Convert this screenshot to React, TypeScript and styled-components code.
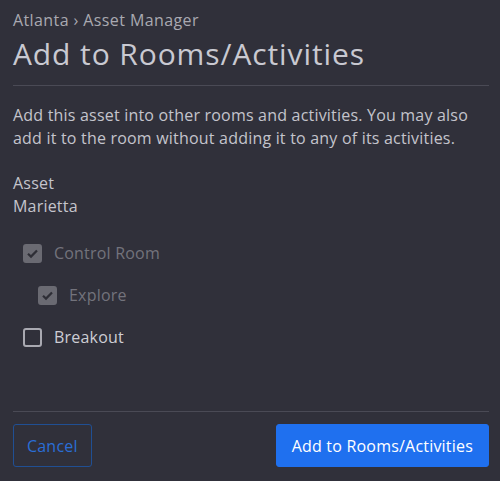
import React from "react";
import styled, { createGlobalStyle } from "styled-components";

const GlobalStyle = createGlobalStyle`
	html, body {
		margin: 0;
		padding: 0;
		background: #30303a;
	}
	body {
		font-family: "Open Sans", "Noto Sans", sans-serif;
	}
`;

const Dialog = styled.div`
	width: 500px;
	height: 481px;
	box-sizing: border-box;
	padding: 6px 11px 14px 13px;
	background: #30303a;
	display: flex;
	flex-direction: column;
`;

const Breadcrumb = styled.div`
	font-size: 16px;
	letter-spacing: 0.4px;
	line-height: 28px;
	color: #a9a9b1;
`;

const Title = styled.h1`
	margin: 0;
	font-size: 30px;
	font-weight: 400;
	letter-spacing: 0.9px;
	line-height: 40px;
	color: #c9c9d1;
	padding-bottom: 11px;
	border-bottom: 1px solid #4a4a55;
`;

const Body = styled.div`
	flex: 1;
	padding-top: 18px;
	color: #c4c4cc;
	font-size: 16px;
	letter-spacing: 0.2px;
	line-height: 23px;
`;

const Text = styled.p`
	margin: 0 0 22px 0;
`;

const AssetInfo = styled.div`
	margin-bottom: 14px;
`;

const OptionRow = styled.label<{ $indent?: boolean; $disabled?: boolean }>`
	display: flex;
	align-items: center;
	gap: 12px;
	height: 42px;
	padding-left: ${({ $indent }) => ($indent ? "25px" : "10px")};
	color: ${({ $disabled }) => ($disabled ? "#73737c" : "#cdcdd4")};
`;

const Box = styled.span<{ $checked?: boolean; $disabled?: boolean }>`
	width: 19px;
	height: 19px;
	box-sizing: border-box;
	border-radius: 3px;
	display: flex;
	align-items: center;
	justify-content: center;
	background: ${({ $checked, $disabled }) =>
		$checked && $disabled ? "#6a6a72" : "transparent"};
	border: 2px solid
		${({ $disabled }) => ($disabled ? "#6a6a72" : "#a9a9b1")};
`;

const Footer = styled.div`
	border-top: 1px solid #4a4a55;
	padding-top: 12px;
	display: flex;
	justify-content: space-between;
`;

const Button = styled.button<{ $primary?: boolean }>`
	height: 43px;
	box-sizing: border-box;
	border-radius: 3px;
	font-family: inherit;
	font-size: 16px;
	letter-spacing: 0.2px;
	padding: 0 ${({ $primary }) => ($primary ? "15px" : "13px")};
	cursor: pointer;
	border: 1px solid ${({ $primary }) => ($primary ? "#1f70ef" : "#204f93")};
	background: ${({ $primary }) => ($primary ? "#1f70ef" : "transparent")};
	color: ${({ $primary }) => ($primary ? "#ffffff" : "#2a6ed6")};
	font-weight: ${({ $primary }) => ($primary ? 500 : 400)};
`;

const Check = () => (
	<svg width="13" height="13" viewBox="0 0 13 13" fill="none">
		<path d="M2 6.8 L5 9.6 L11 3.4" stroke="#2e2e36" strokeWidth="2.2" />
	</svg>
);

const options = [
	{ name: "Control Room", checked: true, disabled: true, indent: false },
	{ name: "Explore", checked: true, disabled: true, indent: true },
	{ name: "Breakout", checked: false, disabled: false, indent: false },
];

const App: React.FC = () => {
	return (
		<>
			<GlobalStyle />
			<Dialog>
				<Breadcrumb>Atlanta › Asset Manager</Breadcrumb>
				<Title>Add to Rooms/Activities</Title>
				<Body>
					<Text>
						Add this asset into other rooms and activities. You may also add it
						to the room without adding it to any of its activities.
					</Text>
					<AssetInfo>
						Asset
						<br />
						Marietta
					</AssetInfo>
					{options.map((opt) => (
						<OptionRow key={opt.name} $indent={opt.indent} $disabled={opt.disabled}>
							<Box $checked={opt.checked} $disabled={opt.disabled}>
								{opt.checked && <Check />}
							</Box>
							{opt.name}
						</OptionRow>
					))}
				</Body>
				<Footer>
					<Button>Cancel</Button>
					<Button $primary>Add to Rooms/Activities</Button>
				</Footer>
			</Dialog>
		</>
	);
};

export default App;
